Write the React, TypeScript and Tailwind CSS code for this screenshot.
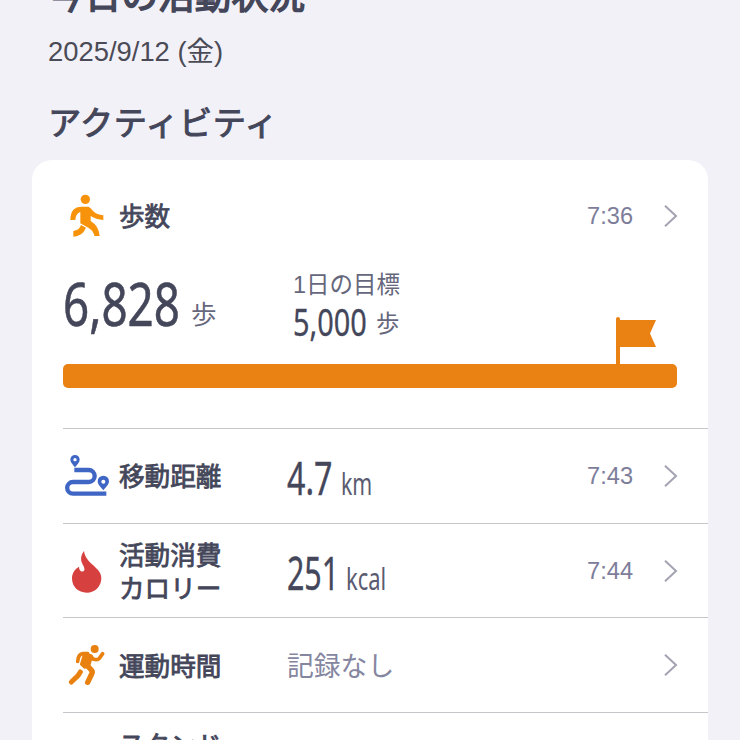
import type { ReactNode } from "react";

function WalkIcon() {
    return (
        <svg viewBox="0 0 144 144" className="size-12 shrink-0" fill="#f7930a" aria-hidden="true">
            <circle cx="67" cy="22" r="14" />
            <path d="M22 84Q22 44 56 44H76Q83 46 88 55Q99 68 121 70V84Q99 83 83 72V87Q108 102 110 132H94Q92 116 76 107L52 94V60Q38 64 37 84Z" />
            <path d="M31 117Q49 115 54 99L69 107Q58 133 31 134Z" />
        </svg>
    );
}

function RouteIcon() {
    return (
        <svg viewBox="0 0 144 144" className="mt-0.5 size-12 shrink-0" aria-hidden="true">
            <path
                d="M34 51H77a18 18 0 0 1 0 36H30a17.5 17.5 0 0 0 0 35H130"
                fill="none"
                stroke="#3f66c4"
                strokeWidth="13"
            />
            <path
                fill="#3f66c4"
                fillRule="evenodd"
                d="M36 43C30 35 22 28 22 20a14 14 0 0 1 28 0C50 28 42 35 36 43ZM36 15a5 5 0 1 0 0 10a5 5 0 1 0 0-10Z"
            />
            <path
                fill="#3f66c4"
                fillRule="evenodd"
                d="M121 112C113 102 104 95 104 85a17 17 0 0 1 34 0C138 95 129 102 121 112ZM121 80a6 6 0 1 0 0 12a6 6 0 1 0 0-12Z"
            />
        </svg>
    );
}

function FlameIcon() {
    return (
        <svg viewBox="0 0 144 144" className="size-12 shrink-0" fill="#d6403e" aria-hidden="true">
            <path d="M63 12C52 26 53 40 58 50C63 60 68 68 61 73C54 76 48 70 48 59C36 66 27 78 27 94C27 120 46 137 71 137C97 137 115 118 115 93C115 60 68 52 63 12Z" />
        </svg>
    );
}

function RunIcon() {
    return (
        <svg
            viewBox="0 0 144 144"
            className="mt-0.5 size-12 shrink-0"
            fill="none"
            stroke="#e8810f"
            strokeLinecap="round"
            strokeLinejoin="round"
            aria-hidden="true"
        >
            <circle cx="95" cy="21" r="12" fill="#e8810f" stroke="none" />
            <path d="M44 58Q46 36 60 35H74" strokeWidth="11" />
            <path d="M82 42L92 52Q104 55 109 49L119 35" strokeWidth="11" />
            <path d="M66 37L84 43L76 70L66 74L57 66Z" fill="#e8810f" strokeWidth="12" />
            <path d="M70 68L85 84Q90 90 86 96L74 121" strokeWidth="16" />
            <path d="M52 90L45 101L25 120" strokeWidth="15" />
        </svg>
    );
}

function Chevron() {
    return (
        <svg viewBox="0 0 14 24" className="h-6 w-3.5 shrink-0" fill="none" aria-hidden="true">
            <path d="M1 1.8L12 12L1 22.2" stroke="#a3a3b1" strokeWidth="2" />
        </svg>
    );
}

type RowProps = {
    icon: ReactNode;
    label: ReactNode;
    time?: string;
    children?: ReactNode;
};

function ActivityRow({ icon, label, time, children }: RowProps) {
    return (
        <div className="flex h-[94.7px] items-center border-t border-[#c6c6ca] pr-[30px]">
            {icon}
            <h3 className="ml-2 w-42 pt-1 text-[25.6px] leading-[33px] [-webkit-text-stroke:0.8px]">{label}</h3>
            <div className="flex grow items-baseline pt-[3px]">{children}</div>
            <span className="mr-[31px] pt-0.5 text-[23.6px] text-[#7d7d9a]">{time}</span>
            <Chevron />
        </div>
    );
}

export default function App() {
    return (
        <main className="h-[740px] overflow-hidden bg-[#f2f1f8] font-['Liberation_Sans','Noto_Sans_CJK_JP',sans-serif] text-[#44465a]">
            <header className="flow-root h-40 pl-12">
                <h1 className="-mt-[27px] h-12 text-[36.7px] leading-12 [-webkit-text-stroke:1.6px]">今日の活動状況</h1>
                <p className="mt-[11px] h-10 text-[27.4px] leading-10 text-[#4b4b57]">2025/9/12 (金)</p>
                <h2 className="mt-8 h-10 text-[33.2px] leading-10 tracking-[0.5px] [-webkit-text-stroke:1px]">アクティビティ</h2>
            </header>

            <section className="mx-8 h-[700px] rounded-[20px] bg-white pl-[31px]">
                <div className="flex h-[112px] items-center pr-[30px]">
                    <WalkIcon />
                    <h3 className="ml-2 grow pt-0.5 text-[25.6px] [-webkit-text-stroke:0.8px]">歩数</h3>
                    <span className="mr-[31px] pt-0.5 text-[23.6px] text-[#7d7d9a]">7:36</span>
                    <Chevron />
                </div>

                <div className="flex h-[91.5px]">
                    <p className="-mt-[5px] flex w-[230px] items-baseline">
                        <span className="inline-block w-[128px] origin-left scale-x-[0.75] font-['Noto_Sans'] text-[61px] leading-[72px] [-webkit-text-stroke:0.6px]">
                            6,828
                        </span>
                        <span className="pb-[5px] text-[25.6px] leading-none text-[#66677c] [transform:translateY(-2px)]">歩</span>
                    </p>
                    <div className="-mt-px">
                        <p className="h-7 text-[23.5px] leading-7 text-[#66677c]">1日の目標</p>
                        <p className="flex items-baseline">
                            <span className="inline-block w-[83px] origin-left scale-x-[0.76] font-['Noto_Sans'] text-[38px] leading-[44px] [-webkit-text-stroke:0.3px]">
                                5,000
                            </span>
                            <span className="text-[23.4px] leading-none text-[#66677c] [transform:translateY(-4px)]">歩</span>
                        </p>
                    </div>
                </div>

                <div className="relative mb-[40.5px] h-6 w-[614px] rounded-[5px] bg-[#e98213]">
                    <svg viewBox="0 0 42 48" className="absolute -top-[47px] left-[552px] h-12 w-[42px]" fill="#e98213" aria-hidden="true">
                        <path d="M1 48V2a2 2 0 0 1 4 0V3H41L35 16.5L41 30H5V48Z" />
                    </svg>
                </div>

                <ActivityRow icon={<RouteIcon />} label="移動距離" time="7:43">
                    <span className="inline-block w-[54px] origin-left scale-x-[0.7] font-['Noto_Sans'] text-[46px] [-webkit-text-stroke:0.4px]">4.7</span>
                    <span className="inline-block w-8 origin-left scale-x-[0.71] font-['Noto_Sans'] text-[30px] text-[#5a5b70]">km</span>
                </ActivityRow>
                <ActivityRow
                    icon={<FlameIcon />}
                    label={
                        <>
                            活動消費
                            <br />
                            カロリー
                        </>
                    }
                    time="7:44"
                >
                    <span className="inline-block w-[59px] origin-left scale-x-[0.66] font-['Noto_Sans'] text-[46px] [-webkit-text-stroke:0.4px]">251</span>
                    <span className="inline-block w-10 origin-left scale-x-[0.73] font-['Noto_Sans'] text-[30px] text-[#5a5b70]">kcal</span>
                </ActivityRow>
                <ActivityRow icon={<RunIcon />} label="運動時間">
                    <span className="text-[26.8px] text-[#85869f]">記録なし</span>
                </ActivityRow>
                <div className="border-t border-[#c6c6ca] pt-[17px] pl-14">
                    <h3 className="text-[25.6px] leading-[33px] [-webkit-text-stroke:0.8px]">スタンド</h3>
                </div>
            </section>
        </main>
    );
}
